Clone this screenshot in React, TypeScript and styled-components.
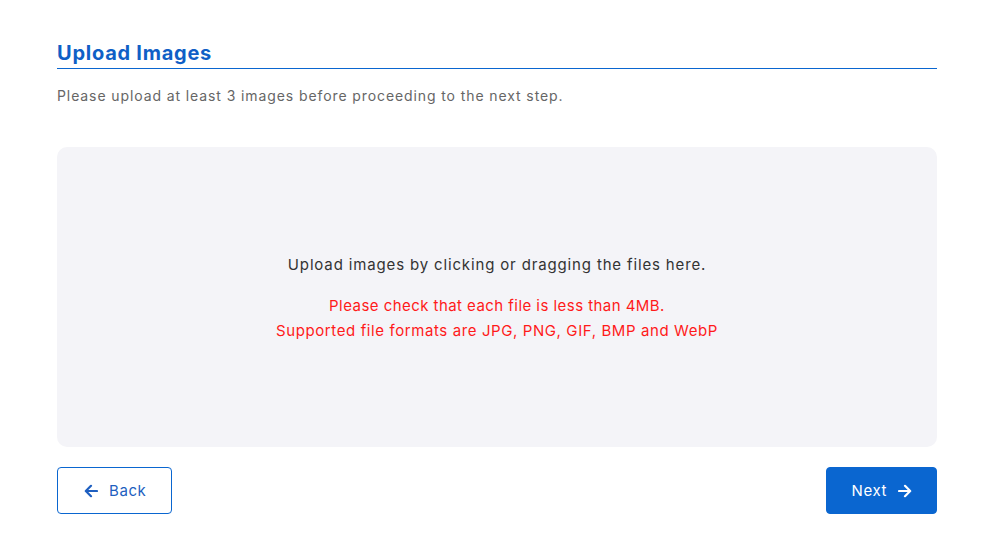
import styled, { createGlobalStyle } from "styled-components";

const GlobalStyle = createGlobalStyle`
  body {
    margin: 0;
    background: #ffffff;
    font-family: "Inter", "Open Sans", sans-serif;
  }
`;

const Wrapper = styled.div`
  width: 880px;
  margin-left: 57px;
  padding-top: 39px;
`;

const Title = styled.h2`
  margin: 0;
  font-size: 20px;
  font-weight: 700;
  letter-spacing: 0.75px;
  color: #0f5fc6;
  line-height: 28px;
  padding-bottom: 1px;
  border-bottom: 1px solid #0a66d0;
`;

const Subtitle = styled.p`
  margin: 16px 0 0;
  font-size: 14px;
  line-height: 22px;
  letter-spacing: 0.9px;
  color: #666666;
`;

const DropZone = styled.div`
  margin-top: 40px;
  height: 300px;
  background: #f4f4f8;
  border-radius: 10px;
  display: flex;
  flex-direction: column;
  align-items: center;
  justify-content: center;
  text-align: center;
  padding-top: 2px;
  box-sizing: border-box;
`;

const DropText = styled.p`
  margin: 0;
  font-size: 15px;
  line-height: 24px;
  letter-spacing: 0.85px;
  color: #333333;
`;

const Warning = styled.div`
  margin-top: 16px;
  font-size: 15px;
  line-height: 25px;
  color: #ff1a1a;
`;

const WarningLine = styled.div<{ spacing: number }>`
  letter-spacing: ${(p) => p.spacing}px;
`;

const Footer = styled.div`
  margin-top: 20px;
  display: flex;
  justify-content: space-between;
`;

const Button = styled.button<{ primary?: boolean }>`
  height: 47px;
  padding: ${(p) => (p.primary ? "0 24px 0 25px" : "0 25px 0 26px")};
  display: flex;
  align-items: center;
  gap: 11px;
  font-family: inherit;
  font-size: 15px;
  letter-spacing: 0.6px;
  border-radius: 4px;
  cursor: pointer;
  border: 1px solid #0a66d0;
  background: ${(p) => (p.primary ? "#0a66d0" : "#ffffff")};
  color: ${(p) => (p.primary ? "#ffffff" : "#1e5fc0")};
`;

const Arrow = ({ dir }: { dir: "left" | "right" }) => (
  <svg width="14" height="14" viewBox="0 0 14 14" fill="none">
    {dir === "left" ? (
      <path
        d="M13 7H2M7 1.8L1.8 7 7 12.2"
        stroke="currentColor"
        strokeWidth="2.2"
        strokeLinecap="round"
        strokeLinejoin="round"
      />
    ) : (
      <path
        d="M1 7h11M7 1.8L12.2 7 7 12.2"
        stroke="currentColor"
        strokeWidth="2.2"
        strokeLinecap="round"
        strokeLinejoin="round"
      />
    )}
  </svg>
);

function App() {
  return (
    <>
      <GlobalStyle />
      <Wrapper>
        <Title>Upload Images</Title>
        <Subtitle>
          Please upload at least 3 images before proceeding to the next step.
        </Subtitle>
        <DropZone>
          <DropText>Upload images by clicking or dragging the files here.</DropText>
          <Warning>
            <WarningLine spacing={0.45}>
              Please check that each file is less than 4MB.
            </WarningLine>
            <WarningLine spacing={0.6}>
              Supported file formats are JPG, PNG, GIF, BMP and WebP
            </WarningLine>
          </Warning>
        </DropZone>
        <Footer>
          <Button>
            <Arrow dir="left" />
            Back
          </Button>
          <Button primary>
            Next
            <Arrow dir="right" />
          </Button>
        </Footer>
      </Wrapper>
    </>
  );
}

export default App;
